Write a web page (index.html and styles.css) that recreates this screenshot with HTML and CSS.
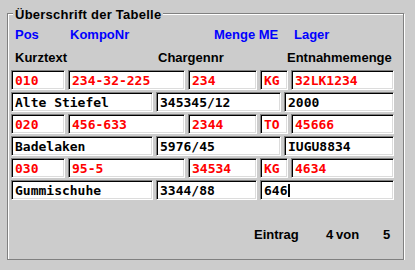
FILE: index.html
```html
<!DOCTYPE html>
<html lang="de">
<head>
<meta charset="UTF-8">
<meta name="viewport" content="width=device-width, initial-scale=1.0">
<title>Entnahme</title>
<link rel="stylesheet" href="styles.css">
</head>
<body>
<div class="group">
  <div class="legend">Überschrift der Tabelle</div>

  <div class="head blue">
    <span class="c-pos">Pos</span><span class="c-kompo">KompoNr</span><span class="c-menge">Menge ME</span><span>Lager</span>
  </div>
  <div class="head">
    <span class="c-kurz">Kurztext</span><span class="c-charge">Chargennr</span><span>Entnahmemenge</span>
  </div>

  <div class="rows">
    <div class="row red">
      <div class="field w-pos">010</div>
      <div class="field w-kompo">234-32-225</div>
      <div class="field w-menge">234</div>
      <div class="field w-me">KG</div>
      <div class="field w-lager">32LK1234</div>
    </div>
    <div class="row">
      <div class="field w-text">Alte Stiefel</div>
      <div class="field w-charge">345345/12</div>
      <div class="field w-entn">2000</div>
    </div>

    <div class="row red">
      <div class="field w-pos">020</div>
      <div class="field w-kompo">456-633</div>
      <div class="field w-menge">2344</div>
      <div class="field w-me">TO</div>
      <div class="field w-lager">45666</div>
    </div>
    <div class="row">
      <div class="field w-text">Badelaken</div>
      <div class="field w-charge">5976/45</div>
      <div class="field w-entn">IUGU8834</div>
    </div>

    <div class="row red">
      <div class="field w-pos">030</div>
      <div class="field w-kompo">95-5</div>
      <div class="field w-menge">34534</div>
      <div class="field w-me">KG</div>
      <div class="field w-lager">4634</div>
    </div>
    <div class="row">
      <div class="field w-text">Gummischuhe</div>
      <div class="field w-charge-short">3344/88</div>
      <div class="field w-entn-long">646<span class="caret"></span></div>
    </div>
  </div>

  <div class="footer">
    <span class="f-label">Eintrag</span><span class="f-num">4</span><span class="f-von">von</span><span>5</span>
  </div>
</div>
</body>
</html>
```

FILE: styles.css
```css
body {
  margin: 0;
  padding: 0;
  background-color: #cccccc;
  font-family: "Liberation Sans", Arial, sans-serif;
  font-size: 13px;
  font-weight: bold;
  color: #000;
}

/* etched group box */
.group {
  position: relative;
  box-sizing: border-box;
  width: 397px;
  height: 247px;
  margin: 13px 0 0 7px;
  padding: 0 0 0 3px;
  border: 1px solid #808080;
  box-shadow: inset 1px 1px #fff, 1px 1px #fff;
}

.legend {
  position: absolute;
  top: -7px;
  left: 5px;
  padding: 0 2px;
  line-height: 15px;
  letter-spacing: 0.25px;
  background-color: #cccccc;
}

.head {
  display: flex;
  height: 16px;
  line-height: 16px;
  padding-left: 4px;
  margin-top: 7px;
  white-space: nowrap;
}
.head.blue {
  color: #0000ff;
  margin-top: 13px;
}
.c-pos { width: 55px; }
.c-kompo { width: 144px; }
.c-menge { width: 80px; }
.c-kurz { width: 143px; }
.c-charge { width: 129px; }

.rows {
  display: flex;
  flex-direction: column;
  gap: 2px;
  margin-top: 4px;
}
.row {
  display: flex;
  gap: 3px;
}
.row.red .field {
  color: #ff0000;
}

/* sunken edit field */
.field {
  box-sizing: border-box;
  height: 20px;
  padding: 2px 2px 0 3px;
  border: 1px solid;
  border-color: #808080 #fff #fff #808080;
  box-shadow: inset 1px 1px #000, inset -1px -1px #dcdcdc;
  background-color: #fff;
  font-family: "DejaVu Sans Mono", "Liberation Mono", monospace;
  font-size: 13px;
  line-height: 15px;
  white-space: nowrap;
  overflow: hidden;
}
.w-pos { width: 54px; }
.w-kompo { width: 117px; }
.w-menge { width: 69px; }
.w-me { width: 28px; }
.w-lager { width: 103px; }
.w-text { width: 142px; }
.w-charge { width: 125px; }
.w-entn { width: 110px; }
.w-charge-short { width: 101px; }
.w-entn-long { width: 134px; }

.caret {
  display: inline-block;
  width: 2px;
  height: 13px;
  margin-left: 1px;
  background-color: #000;
  vertical-align: -2px;
}

.footer {
  display: flex;
  height: 16px;
  line-height: 16px;
  margin-top: 27px;
  padding-left: 243px;
  white-space: nowrap;
}
.f-label { width: 72px; }
.f-num { width: 10px; }
.f-von { width: 47px; }
```
